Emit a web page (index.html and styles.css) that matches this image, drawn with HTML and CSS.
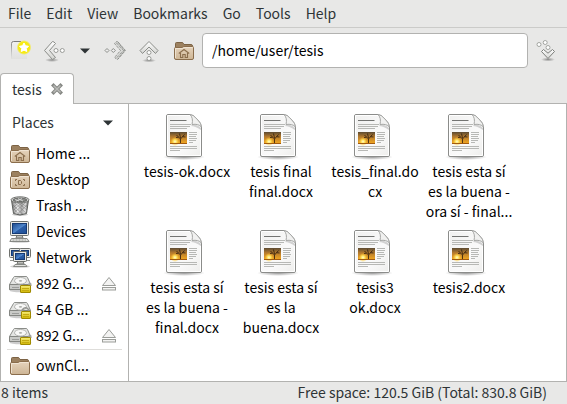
FILE: index.html
```html
<!DOCTYPE html>
<html lang="en">
<head>
<meta charset="utf-8">
<title>tesis</title>
<link rel="stylesheet" href="styles.css">
</head>
<body>
<svg class="defs" width="0" height="0" aria-hidden="true">
  <defs>
    <linearGradient id="g-steel" x1="0" y1="0" x2="0" y2="1"><stop offset="0" stop-color="#fff"/><stop offset="1" stop-color="#d3d4d1"/></linearGradient>
    <linearGradient id="g-folder" x1="0" y1="0" x2="0" y2="1"><stop offset="0" stop-color="#e6d4bd"/><stop offset="1" stop-color="#cdb595"/></linearGradient>
    <linearGradient id="g-bin" x1="0" y1="0" x2="1" y2="0"><stop offset="0" stop-color="#777"/><stop offset=".35" stop-color="#eee"/><stop offset=".6" stop-color="#aaa"/><stop offset=".8" stop-color="#e2e2e2"/><stop offset="1" stop-color="#666"/></linearGradient>
    <linearGradient id="g-screen" x1="0" y1="0" x2="1" y2="1"><stop offset="0" stop-color="#1c4a8e"/><stop offset=".5" stop-color="#4f86cb"/><stop offset=".55" stop-color="#2a5da6"/><stop offset="1" stop-color="#1f4f96"/></linearGradient>
    <linearGradient id="g-sunset" x1="0" y1="0" x2="0" y2="1"><stop offset="0" stop-color="#5b4a32"/><stop offset=".4" stop-color="#b57a2c"/><stop offset="1" stop-color="#f7ab20"/></linearGradient>
    <linearGradient id="g-paper" x1="0" y1="0" x2="1" y2="1"><stop offset="0" stop-color="#f0f0ef"/><stop offset=".6" stop-color="#fafafa"/><stop offset="1" stop-color="#eeeeec"/></linearGradient>
    <linearGradient id="g-lock" x1="0" y1="0" x2="0" y2="1"><stop offset="0" stop-color="#f8ef7a"/><stop offset="1" stop-color="#d0b500"/></linearGradient>
    <radialGradient id="g-glow"><stop offset="0" stop-color="#fdf300"/><stop offset=".75" stop-color="#f5e916"/><stop offset="1" stop-color="#f7ec1c" stop-opacity="0"/></radialGradient>
    <radialGradient id="g-sun"><stop offset="0" stop-color="#fffbd0"/><stop offset=".4" stop-color="#ffe05a"/><stop offset="1" stop-color="#ffc030" stop-opacity="0"/></radialGradient>
    <radialGradient id="g-shade"><stop offset="0" stop-color="#000" stop-opacity=".4"/><stop offset="1" stop-color="#000" stop-opacity="0"/></radialGradient>
    <linearGradient id="g-newtab" gradientUnits="userSpaceOnUse" x1="0" y1="2" x2="0" y2="20"><stop offset="0" stop-color="#777"/><stop offset="1" stop-color="#999" stop-opacity="0"/></linearGradient>
  </defs>
  <symbol id="i-folder" viewBox="0 0 20 20">
    <path d="M1.500 10V2.500Q1.500 1.500 2.500 1.500H8Q9 1.500 9.500 2.500L10 3.500H17Q18.500 3.500 18.500 5V10Z" fill="#9c8160" stroke="#7c6345"/>
    <path d="M.5 7.500Q.5 6.500 1.500 6.500H8L10 5.500H18.500Q19.500 5.500 19.500 6.500V17Q19.500 18.500 18 18.500H2Q.5 18.500 .5 17Z" fill="url(#g-folder)" stroke="#8a6d4c"/>
    <path d="M1.500 17V7.500H8.300L10.300 6.500H18.500" fill="none" stroke="#f3e8d9" stroke-opacity=".8"/>
  </symbol>
  <symbol id="i-home" viewBox="0 0 20 20">
    <use href="#i-folder" width="20" height="20"/>
    <path d="M4.800 12.500L10 8.500L15.200 12.500M6.500 12V16.500H8.800V13.500H11.200V16.500H13.500V12" fill="none" stroke="#8a6d4c" stroke-width="1.100"/>
  </symbol>
  <symbol id="i-desktop" viewBox="0 0 20 20">
    <use href="#i-folder" width="20" height="20"/>
    <path d="M5.500 11V9.500H7M13 9.500H14.500V11M14.500 14V15.500H13M7 15.500H5.500V14M8.500 10.500H10.500L11.500 11.500V13.500L10.500 14.500H8.500Z" fill="none" stroke="#8a6d4c"/>
  </symbol>
  <symbol id="i-trash" viewBox="0 0 20 20">
    <ellipse cx="10" cy="18.500" rx="8" ry="1.500" fill="#000" opacity=".2"/>
    <path d="M1.500 4L3.500 17.500Q10 20.500 16.500 17.500L18.500 4Z" fill="url(#g-bin)" stroke="#5d5f5c"/>
    <path d="M4 6L16 17M7 6L17 14M10 6L17.500 11.500M3 9L13 18.500M4 13L9 18.500M16 6L4 17M13 6L3.500 14M10 6L3 11.500M17 9L7 18.500" stroke="#555" stroke-width=".7" opacity=".55"/>
    <ellipse cx="10" cy="3.800" rx="9" ry="3" fill="#dededc" stroke="#70726f"/>
    <ellipse cx="10" cy="3.900" rx="7" ry="1.800" fill="#888a87" stroke="#4a4c49" stroke-width=".7"/>
    <path d="M5 3.500L9 5M8 2.500L13 5M12 2.500L6 5.200" stroke="#ddd" stroke-width=".8"/>
  </symbol>
  <symbol id="i-computer" viewBox="0 0 22 22">
    <ellipse cx="11" cy="20.500" rx="10" ry="1.300" fill="#000" opacity=".18"/>
    <path d="M8 14H13L14 17H7Z" fill="#bcbdb9" stroke="#777975"/>
    <rect x="1.500" y=".5" width="18" height="14" rx="1" fill="#e9eae7" stroke="#70726e"/>
    <rect x="3.500" y="2.500" width="14" height="10" fill="url(#g-screen)" stroke="#153a73"/>
    <path d="M2.500 17.500H18L20 20.500H.8Z" fill="#e3e4e1" stroke="#868884"/>
    <path d="M3.500 19H17" stroke="#9a9c98" stroke-dasharray="2 1"/>
  </symbol>
  <symbol id="i-network" viewBox="0 0 22 22">
    <ellipse cx="11" cy="19.500" rx="10" ry="1.300" fill="#000" opacity=".18"/>
    <rect x=".5" y="1.500" width="11" height="9" rx="1" fill="#e9eae7" stroke="#70726e"/>
    <rect x="2.500" y="3.500" width="7" height="5" fill="#28589f" stroke="#153a73"/>
    <rect x="10.500" y="1.500" width="11" height="9" rx="1" fill="#e9eae7" stroke="#70726e"/>
    <rect x="12.500" y="3.500" width="7" height="5" fill="#28589f" stroke="#153a73"/>
    <path d="M1 13.500H21" stroke="#91938f"/>
    <path d="M9 14H14L15 17H8Z" fill="#bcbdb9" stroke="#777975"/>
    <rect x="4.500" y="4.500" width="13" height="10" rx="1" fill="#e9eae7" stroke="#656763"/>
    <rect x="6.500" y="6.500" width="9" height="6" fill="url(#g-screen)" stroke="#153a73"/>
    <path d="M6 17.500H16.500L18 19.500H4.500Z" fill="#e3e4e1" stroke="#868884"/>
  </symbol>
  <symbol id="i-drive" viewBox="0 0 24 20">
    <ellipse cx="11.500" cy="15.500" rx="11" ry="1.800" fill="#000" opacity=".2"/>
    <path d="M5.500 1.500H17Q18 1.500 18.500 2.500L21.500 9.500V14.500H.5V9.500L4.500 2.500Q5 1.500 5.500 1.500Z" fill="#e4e5e3" stroke="#8b8d89"/>
    <path d="M.5 9.500H21.500V14.500H.5Z" fill="#c9cac7" stroke="#858783"/>
    <ellipse cx="11.500" cy="5.800" rx="6" ry="3.300" fill="#f8f8f7" stroke="#b4b5b2"/>
    <ellipse cx="11.500" cy="5.800" rx="1.700" ry=".9" fill="#aeb0ac"/>
    <path d="M3.500 12.500H10" stroke="#6f716e" stroke-dasharray="1 1"/>
  </symbol>
  <symbol id="i-drive-open" viewBox="0 0 24 20">
    <use href="#i-drive" width="24" height="20"/>
    <path d="M20 12V9.500Q20 7.500 21.500 8.500L22 11" fill="none" stroke="#a3a4a0" stroke-width="1.500"/>
    <rect x="11.500" y="10.500" width="10" height="7" rx=".5" fill="url(#g-lock)" stroke="#a08a00"/>
    <path d="M13 13.500H20M13 15.500H20" stroke="#c5aa10"/>
  </symbol>
  <symbol id="i-drive-locked" viewBox="0 0 24 20">
    <use href="#i-drive" width="24" height="20"/>
    <path d="M13.500 11V8.500Q16.500 5 19.500 8.500V11" fill="none" stroke="#92938f" stroke-width="1.500"/>
    <rect x="12.500" y="10.500" width="9" height="7" rx=".5" fill="url(#g-lock)" stroke="#a08a00"/>
    <path d="M14 13.500H20M14 15.500H20" stroke="#c5aa10"/>
  </symbol>
  <symbol id="i-eject" viewBox="0 0 16 16">
    <path d="M8 1.500L14.500 9.500H1.500Z" fill="#f3f3f2" stroke="#9b9d99"/>
    <rect x="1.500" y="11.500" width="13" height="2.500" fill="#f3f3f2" stroke="#9b9d99"/>
  </symbol>
  <symbol id="i-doc" viewBox="0 0 48 48">
    <ellipse cx="21" cy="45" rx="21" ry="3" fill="url(#g-shade)"/>
    <path d="M5 2.500H27Q30 2.500 34 7Q38.500 11.500 38.500 15V43Q38.500 44.500 37 44.500H5Q3.500 44.500 3.500 43V4Q3.500 2.500 5 2.500Z" fill="url(#g-paper)" stroke="#8b8c8a"/>
    <path d="M4.500 43V3.500H27M37.500 16V43.500H5" fill="none" stroke="#fff"/>
    <path d="M29.500 12.500Q35 12.500 38 16V18Q32 14 28 14Z" fill="#aaa" opacity=".5"/>
    <path d="M27 2.500Q30.500 6 29 12.500Q35.500 11.500 38.500 15Q38.500 11.500 34 7Q30 2.500 27 2.500Z" fill="#f1f1f0" stroke="#a6a7a5" stroke-linejoin="round"/>
    <path d="M7 8.500H23.500" stroke="#737472"/>
    <path d="M7 12.500H28M7 14.500H27M7 16.500H24M26 20.500H34M26 22.500H34M26 24.500H33M26 26.500H34M26 28.500H33M26 30.500H30M7 34.500H34M7 36.500H34M7 38.500H17" stroke="#b7b8b5"/>
    <rect x="7" y="20" width="17" height="12" fill="url(#g-sunset)"/>
    <circle cx="12" cy="29.500" r="4.500" fill="url(#g-sun)"/>
    <path d="M17.500 31.500V27L13.500 23M17.500 27L21.500 22.500M15.500 25.200L13 25.500M19.500 24.700L22.500 25M17.500 26L16.500 21.500" fill="none" stroke="#2b1b0c" stroke-width=".8"/>
    <path d="M7 31.500H24" stroke="#a05a10"/>
  </symbol>
</svg>

<nav class="menubar" aria-label="Menu">
  <button type="button">File</button>
  <button type="button">Edit</button>
  <button type="button">View</button>
  <button type="button">Bookmarks</button>
  <button type="button">Go</button>
  <button type="button">Tools</button>
  <button type="button">Help</button>
</nav>

<div class="toolbar">
  <button type="button" class="tool tool-new" aria-label="New tab">
    <svg width="24" height="24" viewBox="0 0 24 24"><path d="M2 4Q2 2 4 2H18V20H2Z" fill="url(#g-steel)" opacity=".35"/><path d="M2.500 20V4.500Q2.500 2.500 4.500 2.500H12" fill="none" stroke="url(#g-newtab)"/><circle cx="15" cy="8.500" r="7.500" fill="url(#g-glow)"/><path d="M15 4L16.500 6.800L19.500 7.300L17.300 9.500L17.800 12.500L15 11.200L12.200 12.500L12.700 9.500L10.500 7.300L13.500 6.800Z" fill="#fff" stroke="#fff" stroke-linejoin="round"/></svg>
  </button>
  <button type="button" class="tool" aria-label="Back">
    <svg width="24" height="24" viewBox="0 0 24 24"><ellipse cx="10" cy="21" rx="7" ry="2" fill="url(#g-shade)"/><path d="M10.500 2.500L2.500 11.500L10.500 20.500L13.500 18.500L7.500 11.500L13.500 4.500Q12 2.500 10.500 2.500Z" fill="url(#g-steel)" stroke="#8b8d89" stroke-linejoin="round"/><circle cx="14" cy="11.500" r="2" fill="#fff" stroke="#999b97"/><circle cx="20.300" cy="11.500" r="2" fill="#fff" stroke="#999b97"/></svg>
  </button>
  <button type="button" class="tool tool-history" aria-label="History">
    <svg width="10" height="6" viewBox="0 0 10 6"><path d="M0 .5H10L5 5.500Z" fill="#2e3436"/></svg>
  </button>
  <button type="button" class="tool" aria-label="Forward">
    <svg width="24" height="24" viewBox="0 0 24 24"><g stroke="#777975" stroke-dasharray="1 1"><path d="M13.500 2.500L21.500 11.500L13.500 20.500L10.500 18.500L16.500 11.500L10.500 4.500Q12 2.500 13.500 2.500Z" fill="#d8d9d7"/><path d="M12.500 4L19.500 11.500L12.500 19M14 3L20.500 11.500L14 20" fill="none"/></g><path d="M3 9.500L5 11.500L3 13.500L1 11.500ZM9.300 9.500L11.300 11.500L9.300 13.500L7.300 11.500Z" fill="#eee" stroke="#8b8d89"/></svg>
  </button>
  <button type="button" class="tool" aria-label="Up">
    <svg width="24" height="24" viewBox="0 0 24 24"><ellipse cx="12" cy="21.500" rx="7" ry="1.800" fill="url(#g-shade)"/><path d="M12 2.500L3 11.500L5.500 14.500L12 8L18.500 14.500L21 11.500Z" fill="url(#g-steel)" stroke="#8b8d89" stroke-linejoin="round"/><circle cx="12" cy="13.500" r="2" fill="#fff" stroke="#999b97"/><circle cx="12" cy="19.500" r="2" fill="#fff" stroke="#999b97"/></svg>
  </button>
  <button type="button" class="tool" aria-label="Home"><svg width="20" height="20"><use href="#i-home"/></svg></button>
  <input class="path" type="text" aria-label="Location" value="/home/user/tesis">
  <button type="button" class="tool" aria-label="Go">
    <svg width="24" height="24" viewBox="0 0 24 24"><ellipse cx="14" cy="20.500" rx="7" ry="2" fill="url(#g-shade)"/><path d="M9.500 10.500L14 14.200L18.500 10.500L20.500 12.500L14 19.500L7.500 12.500Z" fill="url(#g-steel)" stroke="#7c7e7a" stroke-linejoin="round"/><circle cx="5" cy="5.500" r="2" fill="#fff" stroke="#a3a5a1"/><circle cx="11.200" cy="3.500" r="2" fill="#fff" stroke="#a3a5a1"/><circle cx="14" cy="8.500" r="2" fill="#fff" stroke="#a3a5a1"/></svg>
  </button>
</div>

<div class="tabs">
  <div class="tab">
    <span>tesis</span>
    <button type="button" aria-label="Close tab"><svg width="12" height="12" viewBox="0 0 12 12"><path d="M2.500 2.500L9.500 9.500M9.500 2.500L2.500 9.500" stroke="#858783" stroke-width="3.500" stroke-linecap="square"/><path d="M2.500 2.500L9.500 9.500M9.500 2.500L2.500 9.500" stroke="#b9bab7" stroke-width="1.500"/></svg></button>
  </div>
</div>

<main class="panes">
  <aside class="sidebar">
    <div class="mode">
      <select aria-label="Side pane"><option>Places</option></select>
      <svg width="10" height="6" viewBox="0 0 10 6"><path d="M0 .5H10L5 5.500Z" fill="#2e3436"/></svg>
    </div>
    <ul class="places">
      <li><a href="#"><svg class="icon"><use href="#i-home" x="1" y="1" width="20" height="20"/></svg>Home ...</a></li>
      <li><a href="#"><svg class="icon"><use href="#i-desktop" x="1" y="1" width="20" height="20"/></svg>Desktop</a></li>
      <li><a href="#"><svg class="icon"><use href="#i-trash" x="1" y="1" width="20" height="20"/></svg>Trash ...</a></li>
      <li><a href="#"><svg class="icon"><use href="#i-computer" width="22" height="22"/></svg>Devices</a></li>
      <li><a href="#"><svg class="icon"><use href="#i-network" width="22" height="22"/></svg>Network</a></li>
      <li><a href="#"><svg class="icon"><use href="#i-drive-open" y="2" width="24" height="20"/></svg>892 G...</a><button type="button" aria-label="Eject"><svg width="16" height="16"><use href="#i-eject"/></svg></button></li>
      <li><a href="#"><svg class="icon"><use href="#i-drive-locked" y="2" width="24" height="20"/></svg>54 GB ...</a></li>
      <li><a href="#"><svg class="icon"><use href="#i-drive-open" y="2" width="24" height="20"/></svg>892 G...</a><button type="button" aria-label="Eject"><svg width="16" height="16"><use href="#i-eject"/></svg></button></li>
      <li class="bookmark"><a href="#"><svg class="icon"><use href="#i-folder" x="1" y="1" width="20" height="20"/></svg>ownCl...</a></li>
    </ul>
  </aside>
  <section class="files" aria-label="Files">
    <a class="file" href="#"><svg><use href="#i-doc"/></svg><span>tesis-ok.docx</span></a>
    <a class="file" href="#"><svg><use href="#i-doc"/></svg><span>tesis final<br>final.docx</span></a>
    <a class="file" href="#"><svg><use href="#i-doc"/></svg><span>tesis_final.do<br>cx</span></a>
    <a class="file" href="#"><svg><use href="#i-doc"/></svg><span>tesis esta sí<br>es la buena -<br>ora sí - final...</span></a>
    <a class="file" href="#"><svg><use href="#i-doc"/></svg><span>tesis esta sí<br>es la buena -<br>final.docx</span></a>
    <a class="file" href="#"><svg><use href="#i-doc"/></svg><span>tesis esta sí<br>es la<br>buena.docx</span></a>
    <a class="file" href="#"><svg><use href="#i-doc"/></svg><span>tesis3<br>ok.docx</span></a>
    <a class="file" href="#"><svg><use href="#i-doc"/></svg><span>tesis2.docx</span></a>
  </section>
</main>

<footer class="status">
  <span>8 items</span>
  <span>Free space: 120.5 GiB (Total: 830.8 GiB)</span>
</footer>
</body>
</html>
```
FILE: styles.css
```css
* { box-sizing: border-box; }

body {
  margin: 0;
  min-height: 100vh;
  display: flex;
  flex-direction: column;
  background: #e8e8e7;
  color: #2e3436;
  font: 14px/20px "Noto Sans CJK SC", "Noto Sans", sans-serif;
}

button, input, select { font: inherit; color: inherit; }
button { padding: 0; border: 0; background: none; }
a { color: #000; text-decoration: none; }
svg { display: block; flex: none; }
.defs { position: absolute; }

.menubar {
  display: flex;
  gap: 15px;
  height: 28px;
  padding: 0 8px 2px;
  border-bottom: 1px solid #cbcbc9;
}

.toolbar {
  display: flex;
  align-items: center;
  height: 45px;
  padding: 0 9px;
}
.tool { display: grid; place-items: center; }
.tool-new { margin-right: 9px; }
.tool-history { width: 38px; height: 24px; }
.tool:nth-child(5) { margin-left: 9px; }
.tool:nth-child(6) { margin-left: 13px; }
.path {
  flex: 1;
  min-width: 0;
  height: 35px;
  margin: 0 6px 0 8px;
  padding: 0 9px 2px;
  border: 1px solid #b2b2b0;
  border-radius: 4px;
  background: #fff;
  color: #000;
}

.tabs {
  display: flex;
  height: 31px;
  border-bottom: 1px solid #b2b2b0;
}
.tab {
  display: flex;
  align-items: center;
  gap: 9px;
  height: 31px;
  padding: 0 10px 0 11px;
  border: 1px solid #b2b2b0;
  border-bottom: 0;
  border-radius: 4px 4px 0 0;
  background: #fff;
}

.panes {
  flex: 1;
  display: flex;
  border: 1px solid #b2b2b0;
  border-top: 0;
  background: #fff;
}
.sidebar {
  width: 128px;
  padding: 6px 6px 1px;
  border-right: 1px solid #b2b2b0;
}
.mode {
  display: flex;
  align-items: center;
  height: 26px;
  padding: 0 9px 0 5px;
}
.mode select {
  flex: 1;
  min-width: 0;
  padding: 0 0 2px;
  border: 0;
  background: none;
  appearance: none;
}
.places { margin: 5px 0 0; padding: 0; list-style: none; }
.places li { display: flex; align-items: center; height: 26px; padding: 0 2px; }
.places a { flex: 1; display: flex; gap: 3px; white-space: nowrap; }
.places .bookmark { height: 30px; padding-top: 2px; border-top: 1px solid #deddda; }
.icon { width: 24px; height: 22px; }
.places button { margin-right: 3px; }

.files {
  flex: 1;
  display: grid;
  grid-template-columns: repeat(auto-fill, 94px);
  align-content: start;
  row-gap: 6px;
  padding: 8px 0 0 11px;
}
.file {
  display: flex;
  flex-direction: column;
  align-items: center;
  gap: 1px;
  min-height: 110px;
  text-align: center;
  white-space: nowrap;
}
.file svg { width: 48px; height: 48px; }

.status {
  display: flex;
  justify-content: space-between;
  height: 22px;
  padding: 0 20px 0 1px;
}
```
